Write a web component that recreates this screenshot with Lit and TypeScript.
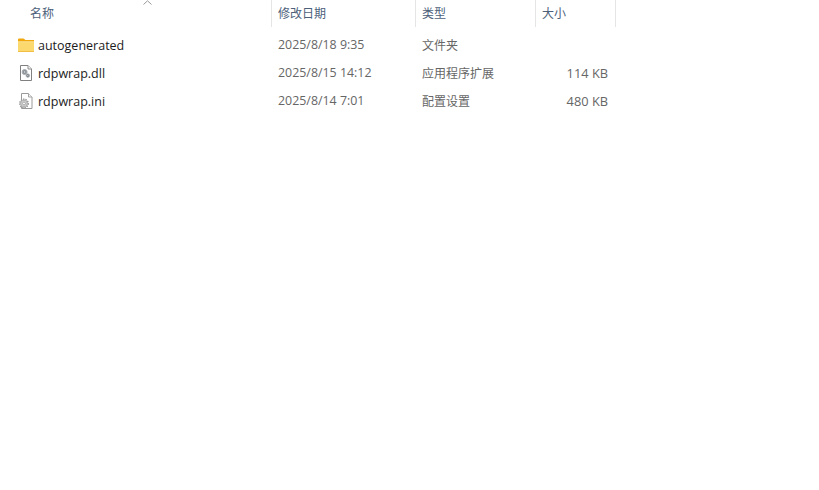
import { LitElement, html, svg, css } from "lit";
import { customElement } from "lit/decorators.js";

const folder = html`<svg width="16" height="16" viewBox="0 0 16 16">
  <path d="M0 2.5Q0 1.5 1 1.5H5.5L7.5 3H16V6H0Z" fill="#f0a80e"/>
  <path d="M0 4.5H15.2Q16 4.5 16 5.3V14Q16 15 15 15H1Q0 15 0 14Z" fill="#fcd96f"/>
  <path d="M0 4.5H16V5.2H0Z" fill="#fbe9a6"/>
  <path d="M0 14.2H16V15H0Z" fill="#f0b83a"/>
</svg>`;

const dll = html`<svg width="16" height="16" viewBox="0 0 16 16">
  <path d="M2.5 .5H10L13.5 4V15.5H2.5Z" fill="#fff" stroke="#808080" stroke-width="1"/>
  <path d="M10 .5V4H13.5" fill="#f2f2f2" stroke="#909090" stroke-width="1"/>
  ${svg`
    <circle cx="6.6" cy="7" r="2.5" fill="#8a9096" stroke="#aab0b5"/>
    <circle cx="6.6" cy="7" r=".7" fill="#e4e6e8"/>
    <circle cx="9.8" cy="10.6" r="1.8" fill="#7c8288" stroke="#aab0b5" stroke-width=".7"/>
    <circle cx="9.8" cy="10.6" r=".5" fill="#e4e6e8"/>
  `}
</svg>`;

const ini = html`<svg width="16" height="16" viewBox="0 0 16 16">
  <path d="M3.5 .5H10.5L14 4V15.5H3.5Z" fill="#fff" stroke="#9a9a9a" stroke-width="1"/>
  <path d="M10.5 .5V4H14" fill="#f2f2f2" stroke="#a5a5a5" stroke-width="1"/>
  <circle cx="6" cy="10.5" r="4.2" fill="#d8d8d8" stroke="#9a9a9a" stroke-width="1.6" stroke-dasharray="1.3 1"/>
  <circle cx="6" cy="10.5" r="3.2" fill="#d4d4d4" stroke="#a0a0a0" stroke-width=".6"/>
  <circle cx="6" cy="10.5" r="1.4" fill="#fff" stroke="#8f8f8f" stroke-width=".7"/>
</svg>`;

const rows = [
  { icon: folder, name: "autogenerated", date: "2025/8/18 9:35", type: "文件夹", size: "" },
  { icon: dll, name: "rdpwrap.dll", date: "2025/8/15 14:12", type: "应用程序扩展", size: "114 KB" },
  { icon: ini, name: "rdpwrap.ini", date: "2025/8/14 7:01", type: "配置设置", size: "480 KB" },
];

@customElement("app-root")
export class AppRoot extends LitElement {
  static styles = css`
    :host {
      display: block;
      width: 819px;
      height: 490px;
      background: #fff;
      font-family: "Noto Sans CJK SC", "Open Sans", "Noto Sans", sans-serif;
      font-size: 12px;
      overflow: hidden;
    }
    .sheet { position: relative; }
    .arrow { position: absolute; left: 143px; top: 0; display: block; }
    .head, .row {
      display: grid;
      grid-template-columns: 272px 144px 120px 80px;
      width: 616px;
    }
    .head { height: 27px; margin-bottom: 4px; }
    .head > div {
      box-sizing: border-box;
      border-right: 1px solid #e5e5e5;
      padding: 0 6px;
      color: #4c607a;
      line-height: 26px;
      white-space: nowrap;
    }
    .head > div:first-child { padding-left: 30px; }
    .row { height: 28px; align-items: center; color: #666; }
    .row > div { padding: 0 6px; white-space: nowrap; line-height: 28px; height: 28px; }
    .name {
      display: flex;
      align-items: center;
      gap: 4px;
      padding-left: 18px !important;
      font-family: "Open Sans", "Noto Sans", sans-serif;
      font-size: 12.5px;
      color: #1c1c1c;
    }
    .name svg { flex: none; display: block; }
    .name span { line-height: 26px; padding-top: 2px; }
    .date, .size { font-family: "Open Sans", "Noto Sans", sans-serif; font-size: 12.4px; }
    .size { text-align: right; padding-right: 8px !important; font-size: 12.8px; }
  `;

  render() {
    return html`<div class="sheet">
      <svg class="arrow" width="9" height="5" viewBox="0 0 9 5">
        <path d="M.5 4.5L4.5 .8L8.5 4.5" fill="none" stroke="#9a9a9a" stroke-width="1"/>
      </svg>
      <div class="head">
        <div>名称</div><div>修改日期</div><div>类型</div><div>大小</div>
      </div>
      ${rows.map(
        (r) => html`<div class="row">
          <div class="name">${r.icon}<span>${r.name}</span></div>
          <div class="date">${r.date}</div>
          <div>${r.type}</div>
          <div class="size">${r.size}</div>
        </div>`
      )}
    </div>`;
  }
}
